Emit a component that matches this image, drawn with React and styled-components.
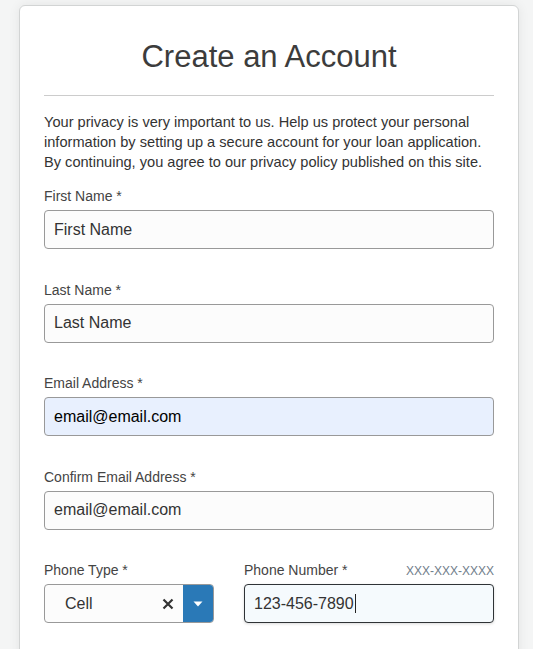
import React from "react";
import styled, { createGlobalStyle } from "styled-components";

const GlobalStyle = createGlobalStyle`
  html, body {
    margin: 0;
    padding: 0;
    background: #f4f5f5;
    font-family: "Liberation Sans", Arial, Helvetica, sans-serif;
    color: #333333;
  }
  * { box-sizing: border-box; }
`;

const Page = styled.div`
  padding: 5px 0 0 19px;
  height: 649px;
  overflow: hidden;
`;

const Card = styled.div`
  width: 500px;
  min-height: 700px;
  background: #ffffff;
  border: 1px solid #d2d4d4;
  border-radius: 6px;
  box-shadow: 0 0 12px rgba(0, 0, 0, 0.07);
  padding: 34px 24px 0 24px;
`;

const Title = styled.h2`
  margin: 0;
  font-size: 31px;
  font-weight: 400;
  line-height: 33px;
  text-align: center;
  color: #3c3c3c;
`;

const Divider = styled.hr`
  margin: 22px 0 0 0;
  border: none;
  border-top: 1px solid #cccccc;
`;

const Intro = styled.p`
  margin: 16px 0 14px 0;
  font-size: 14.6px;
  line-height: 20px;
  color: #333333;
  white-space: nowrap;
`;

const Group = styled.div`
  margin-bottom: 30.5px;
`;

const LabelRow = styled.div`
  display: flex;
  justify-content: space-between;
  align-items: baseline;
  margin-bottom: 4px;
`;

const Label = styled.label`
  font-size: 14px;
  line-height: 20px;
  color: #444444;
`;

const Hint = styled.span`
  font-size: 12px;
  color: #6f7d8a;
`;

const Input = styled.input`
  display: block;
  width: 100%;
  height: 39px;
  padding: 0 9px;
  font-family: inherit;
  font-size: 16px;
  color: ${(p) => (p.$autofill ? "#000000" : "#333333")};
  background: ${(p) => (p.$autofill ? "#e8f0fe" : "#fcfcfc")};
  border: 1px solid #999999;
  border-radius: 4px;
  outline: none;
`;

const FocusedBox = styled.div`
  display: flex;
  align-items: center;
  height: 39px;
  padding: 0 9px;
  font-size: 16px;
  color: #333333;
  background: #f5fafd;
  border: 1px solid #2f3336;
  border-radius: 4px;
  box-shadow: 0 1px 3px rgba(0, 0, 0, 0.15);
`;

const Caret = styled.span`
  display: inline-block;
  width: 1px;
  height: 19px;
  margin-left: 1px;
  background: #222222;
`;

const PhoneRow = styled.div`
  display: grid;
  grid-template-columns: 170px 1fr;
  column-gap: 30px;
`;

const Select = styled.div`
  display: flex;
  height: 39px;
  border: 1px solid #999999;
  border-radius: 4px;
  background: #fcfcfc;
  overflow: hidden;
`;

const SelectValue = styled.div`
  flex: 1;
  display: flex;
  align-items: center;
  padding-left: 20px;
  font-size: 16px;
  color: #333333;
`;

const Clear = styled.div`
  width: 30px;
  display: flex;
  align-items: center;
  justify-content: center;
  color: #333333;
`;

const Toggle = styled.div`
  width: 30px;
  display: flex;
  align-items: center;
  justify-content: center;
  background: #2a79b7;
`;

const App = () => {
  return (
    <>
      <GlobalStyle />
      <Page>
        <Card>
          <Title>Create an Account</Title>
          <Divider />
          <Intro>
            Your privacy is very important to us. Help us protect your personal
            <br />
            information by setting up a secure account for your loan application.
            <br />
            By continuing, you agree to our privacy policy published on this site.
          </Intro>

          <Group>
            <LabelRow>
              <Label>First Name *</Label>
            </LabelRow>
            <Input defaultValue="First Name" readOnly />
          </Group>

          <Group>
            <LabelRow>
              <Label>Last Name *</Label>
            </LabelRow>
            <Input defaultValue="Last Name" readOnly />
          </Group>

          <Group>
            <LabelRow>
              <Label>Email Address *</Label>
            </LabelRow>
            <Input $autofill defaultValue="email@email.com" readOnly />
          </Group>

          <Group>
            <LabelRow>
              <Label>Confirm Email Address *</Label>
            </LabelRow>
            <Input defaultValue="email@email.com" readOnly />
          </Group>

          <PhoneRow>
            <div>
              <LabelRow>
                <Label>Phone Type *</Label>
              </LabelRow>
              <Select>
                <SelectValue>Cell</SelectValue>
                <Clear>
                  <svg width="12" height="12" viewBox="0 0 12 12">
                    <path d="M1.5 1.5 L10.5 10.5 M10.5 1.5 L1.5 10.5" stroke="#333" strokeWidth="2.2" strokeLinecap="butt" />
                  </svg>
                </Clear>
                <Toggle>
                  <svg width="10" height="6" viewBox="0 0 10 6">
                    <path d="M0.5 0.5 L9.5 0.5 L5 5.5 Z" fill="#ffffff" />
                  </svg>
                </Toggle>
              </Select>
            </div>
            <div>
              <LabelRow>
                <Label>Phone Number *</Label>
                <Hint>XXX-XXX-XXXX</Hint>
              </LabelRow>
              <FocusedBox>
                123-456-7890
                <Caret />
              </FocusedBox>
            </div>
          </PhoneRow>
        </Card>
      </Page>
    </>
  );
};

export default App;
